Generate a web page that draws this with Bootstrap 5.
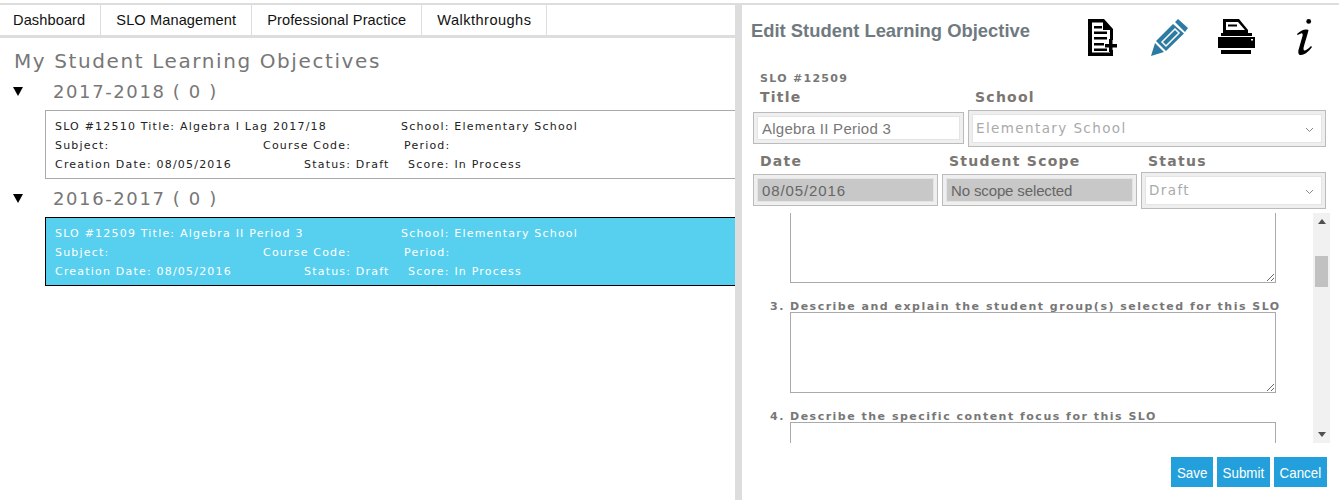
<!doctype html>
<html lang="en"><head><meta charset="utf-8"><title>SLO</title>
<link href="https://cdn.jsdelivr.net/npm/bootstrap@5.3.0/dist/css/bootstrap.min.css" rel="stylesheet">
<style>
html,body{height:500px;overflow:hidden}
body{background:#fff;font-family:"DejaVu Sans",Verdana,sans-serif;color:#222}
.shell{height:500px;padding-top:3px}
.left-pane{width:735px;border-top:2px solid #ddd;overflow:hidden}
.split{width:7px;background:#ddd}
.right-pane{width:597px;border-top:2px solid #ddd;padding:0 13px 0 12px}
.tabs{height:33px;border-bottom:3px solid #ddd}
.tabs a{font:14.6px "Liberation Sans",Arial,sans-serif;color:#111;text-decoration:none;padding:7px 15px 0;border-right:1px solid #ddd;height:30px;letter-spacing:.1px}
.tabs a:first-child{padding-left:13px}
.tabs a:last-child{letter-spacing:.45px}
.page-h{font-size:20px;letter-spacing:1.6px;color:#777;margin:11px 0 0 14px;line-height:24px;font-weight:400}
.year{margin:6px 0 0 13px;height:24px;align-items:center}
.year svg{margin-right:30px}
.year span{font-size:18px;letter-spacing:1.6px;color:#777}
.slo{margin:7px 0 7px 45px;border:1px solid #aaa;height:69px;padding:6px 9px;font-size:11px;letter-spacing:1.2px;line-height:19px;color:#222;width:700px}
.slo.sel{background:#57cfee;border-color:#000;color:#fff}
.c1{width:346px}.c2{width:208px}.c3{width:141px}.c4{width:249px}.c5{width:104px}
.rt-title{font:bold 18.4px "Liberation Sans",Arial,sans-serif;color:#6f7a80;white-space:nowrap;margin:15px 0 0 -3px}
.tools{margin:14px 0 0 0}
.tools svg{display:block}
.t-doc{margin-right:34px}.t-pen{margin-right:30px}.t-prn{margin-right:42px}.t-inf{margin-right:14px}
.slo-no{font-size:11px;font-weight:700;letter-spacing:1.3px;color:#777;margin:16px 0 0 6px;line-height:14px}
.lbl{font-size:14px;font-weight:700;letter-spacing:1.25px;color:#7a7672;line-height:18px;white-space:nowrap;margin:2px 0 6px 7px}
.row2 .lbl{margin-bottom:4px}
.fbox{border:1px solid #bbb;padding:3px;height:32px;background:#efefef}
.fbox input{display:block;width:100%;height:24px;border:1px solid #e4e4e4;color:#777;padding:0 4px;outline:0;background:#fff;font:15px "Liberation Sans",Arial,sans-serif}
.fbox.dis input{background:#c8c8c8;color:#666}
.in-title{letter-spacing:.25px}.in-date{letter-spacing:.9px}.in-scope{letter-spacing:-.13px}
.sel-box{border:1px solid #bbb;padding:3px;height:37px;margin-top:-2px;background:#eee}
.fsel{height:100%;background:#fff;border:1px solid #e4e4e4;font-size:13.5px;letter-spacing:1.4px;color:#aaa;padding:0 7px 0 3px;display:flex;align-items:center;justify-content:space-between}
.fsel svg{margin-top:3px}
.row1{margin-left:-1px}
.t-title{width:211px}.t-school{width:358px;margin-left:4px}
.row2{margin-left:-1px;margin-top:3px}
.w-date{width:185px}.w-scope{width:195px;margin-left:4px}.w-status{width:185px;margin-left:4px}
.scroll-wrap{height:230px;margin:4px -4px 0;overflow:hidden}
.qs{width:563px;padding-left:20px;overflow:hidden;height:230px}
.qs textarea{display:block;width:486px;border:1px solid #aaa;border-radius:0;outline:0;margin-left:20px;background:#fff}
.ta1{height:70px;border-top:0!important}
.ta2{height:81px}
.ta3{height:40px}
.qlbl{font-size:11px;font-weight:700;letter-spacing:1.5px;color:#777;line-height:11px;white-space:nowrap;margin-top:18px}
.qlbl span{display:inline-block;width:20px}
.sbar{width:17px;background:#f1f1f1}
.sbar i{display:block;height:17px;flex:none}
.thumb{height:31px;background:#c1c1c1;margin:26px 2px 0}
.arrow{width:0;height:0;border-left:4px solid transparent;border-right:4px solid transparent;margin:0 auto}
.arr-u{border-bottom:5px solid #505050}.arr-d{border-top:5px solid #505050}
.btns{margin:14px -1px 0 0;gap:4px}
.btns .btn{background:#239fdb;border:0;border-radius:0;color:#fff;font:15px "Liberation Sans",Arial,sans-serif;height:30px;padding:0}
.btns .btn span{display:inline-block;transform:scaleX(.89)}
.b-save{width:42px}.b-sub,.b-can{width:53px}
</style></head><body>
<div class="shell d-flex">
 <div class="left-pane flex-shrink-0">
  <nav class="tabs d-flex">
   <a href="#">Dashboard</a><a href="#">SLO Management</a><a href="#">Professional Practice</a><a href="#">Walkthroughs</a>
  </nav>
  <h1 class="page-h">My Student Learning Objectives</h1>
  <div class="year d-flex"><svg width="10" height="10" viewBox="0 0 10 10"><path d="M0 1h10L5 10z" fill="#000"/></svg><span>2017-2018 ( 0 )</span></div>
  <div class="slo">
   <div class="d-flex"><span class="c1">SLO #12510 Title: Algebra I Lag 2017/18</span><span>School: Elementary School</span></div>
   <div class="d-flex"><span class="c2">Subject:</span><span class="c3">Course Code:</span><span>Period:</span></div>
   <div class="d-flex"><span class="c4">Creation Date: 08/05/2016</span><span class="c5">Status: Draft</span><span>Score: In Process</span></div>
  </div>
  <div class="year d-flex"><svg width="10" height="10" viewBox="0 0 10 10"><path d="M0 1h10L5 10z" fill="#000"/></svg><span>2016-2017 ( 0 )</span></div>
  <div class="slo sel">
   <div class="d-flex"><span class="c1">SLO #12509 Title: Algebra II Period 3</span><span>School: Elementary School</span></div>
   <div class="d-flex"><span class="c2">Subject:</span><span class="c3">Course Code:</span><span>Period:</span></div>
   <div class="d-flex"><span class="c4">Creation Date: 08/05/2016</span><span class="c5">Status: Draft</span><span>Score: In Process</span></div>
  </div>
 </div>
 <div class="split flex-shrink-0"></div>
 <div class="right-pane flex-shrink-0">
  <div class="d-flex justify-content-between">
   <div class="rt-title">Edit Student Learning Objective</div>
   <div class="tools d-flex align-items-start">
    <svg class="t-doc" width="29" height="37" viewBox="0 0 29 37"><path fill="#000" d="M0 0H16L25 10V21H22V11H15V3.500H4V33.500H22V31H25V37H0Z"/><path fill="#000" d="M6 7h8v2.500H6zM6 12.500h13v2.500H6zM6 18h13v2.500H6zM6 24h10v2.500H6zM6 29.500h13v2.500H6zM21 20h3.500v5H29v3.500h-4.500v4.500H21v-4.500h-4V25h4z"/></svg>
    <svg class="t-pen" width="37" height="37" viewBox="0 0 37 37"><path fill="#2d7ba3" d="M27 0L37 9L34 13L24 3ZM22 5L33 14.500L15 32L5 22ZM4 24L13 33L0 37Z"/><path fill="none" stroke="#fff" stroke-width="1.500" d="M11 23L24 10L28 14L15 27Z"/></svg>
    <svg class="t-prn" width="37" height="35" viewBox="0 0 37 35"><path fill="#000" fill-rule="evenodd" d="M5 0H21L30 11V14H5ZM8 3V11H27L20 3Z"/><path fill="#000" d="M10 5.500h9v2h-9zM3 14h31v3H3zM0 18h37v11H0zM3 31h30v4H3z"/><rect x="33" y="20" width="2" height="1.500" fill="#fff"/></svg>
    <svg class="t-inf" width="15" height="36" viewBox="0 0 15 36"><circle cx="11.700" cy="2.400" r="2.400" fill="#000"/><path fill="#000" d="M0 15C3 12 7 10 10 10.500L11.500 11C11 14 9 20 7 27C6 30 6.500 32 8 31.500C10 31 12 29 14 27L15 28C12 32 8 36 4 36C1.500 36 1 34 1.500 31L5.500 17C6 15 5.500 14 4 14.500L.5 16Z"/></svg>
   </div>
  </div>
  <div class="slo-no">SLO #12509</div>
  <div class="d-flex row1">
   <div class="t-title"><div class="lbl">Title</div><div class="fbox"><input class="in-title" value="Algebra II Period 3" aria-label="Title"></div></div>
   <div class="t-school"><div class="lbl">School</div><div class="sel-box"><div class="fsel"><span>Elementary School</span><svg width="9" height="6" viewBox="0 0 9 6"><path d="M1 1l3.500 3.500L8 1" fill="none" stroke="#888"/></svg></div></div></div>
  </div>
  <div class="d-flex row2">
   <div class="w-date"><div class="lbl">Date</div><div class="fbox dis"><input class="in-date" value="08/05/2016" aria-label="Date"></div></div>
   <div class="w-scope"><div class="lbl">Student Scope</div><div class="fbox dis"><input class="in-scope" value="No scope selected" aria-label="Scope"></div></div>
   <div class="w-status"><div class="lbl">Status</div><div class="sel-box"><div class="fsel"><span>Draft</span><svg width="9" height="6" viewBox="0 0 9 6"><path d="M1 1l3.500 3.500L8 1" fill="none" stroke="#888"/></svg></div></div></div>
  </div>
  <div class="scroll-wrap d-flex">
   <div class="qs flex-shrink-0">
    <textarea class="ta1" aria-label="Answer 2"></textarea>
    <div class="qlbl"><span>3.</span>Describe and explain the student group(s) selected for this SLO</div>
    <textarea class="ta2" aria-label="Answer 3"></textarea>
    <div class="qlbl"><span>4.</span>Describe the specific content focus for this SLO</div>
    <textarea class="ta3" aria-label="Answer 4"></textarea>
   </div>
   <div class="sbar d-flex flex-column flex-shrink-0">
    <i class="d-flex align-items-center"><span class="arrow arr-u"></span></i>
    <div class="thumb"></div>
    <i class="mt-auto d-flex align-items-center"><span class="arrow arr-d"></span></i>
   </div>
  </div>
  <div class="btns d-flex justify-content-end">
   <button class="btn b-save"><span>Save</span></button><button class="btn b-sub"><span>Submit</span></button><button class="btn b-can"><span>Cancel</span></button>
  </div>
 </div>
</div>
<script src="https://cdn.jsdelivr.net/npm/bootstrap@5.3.0/dist/js/bootstrap.bundle.min.js"></script>
</body></html>
